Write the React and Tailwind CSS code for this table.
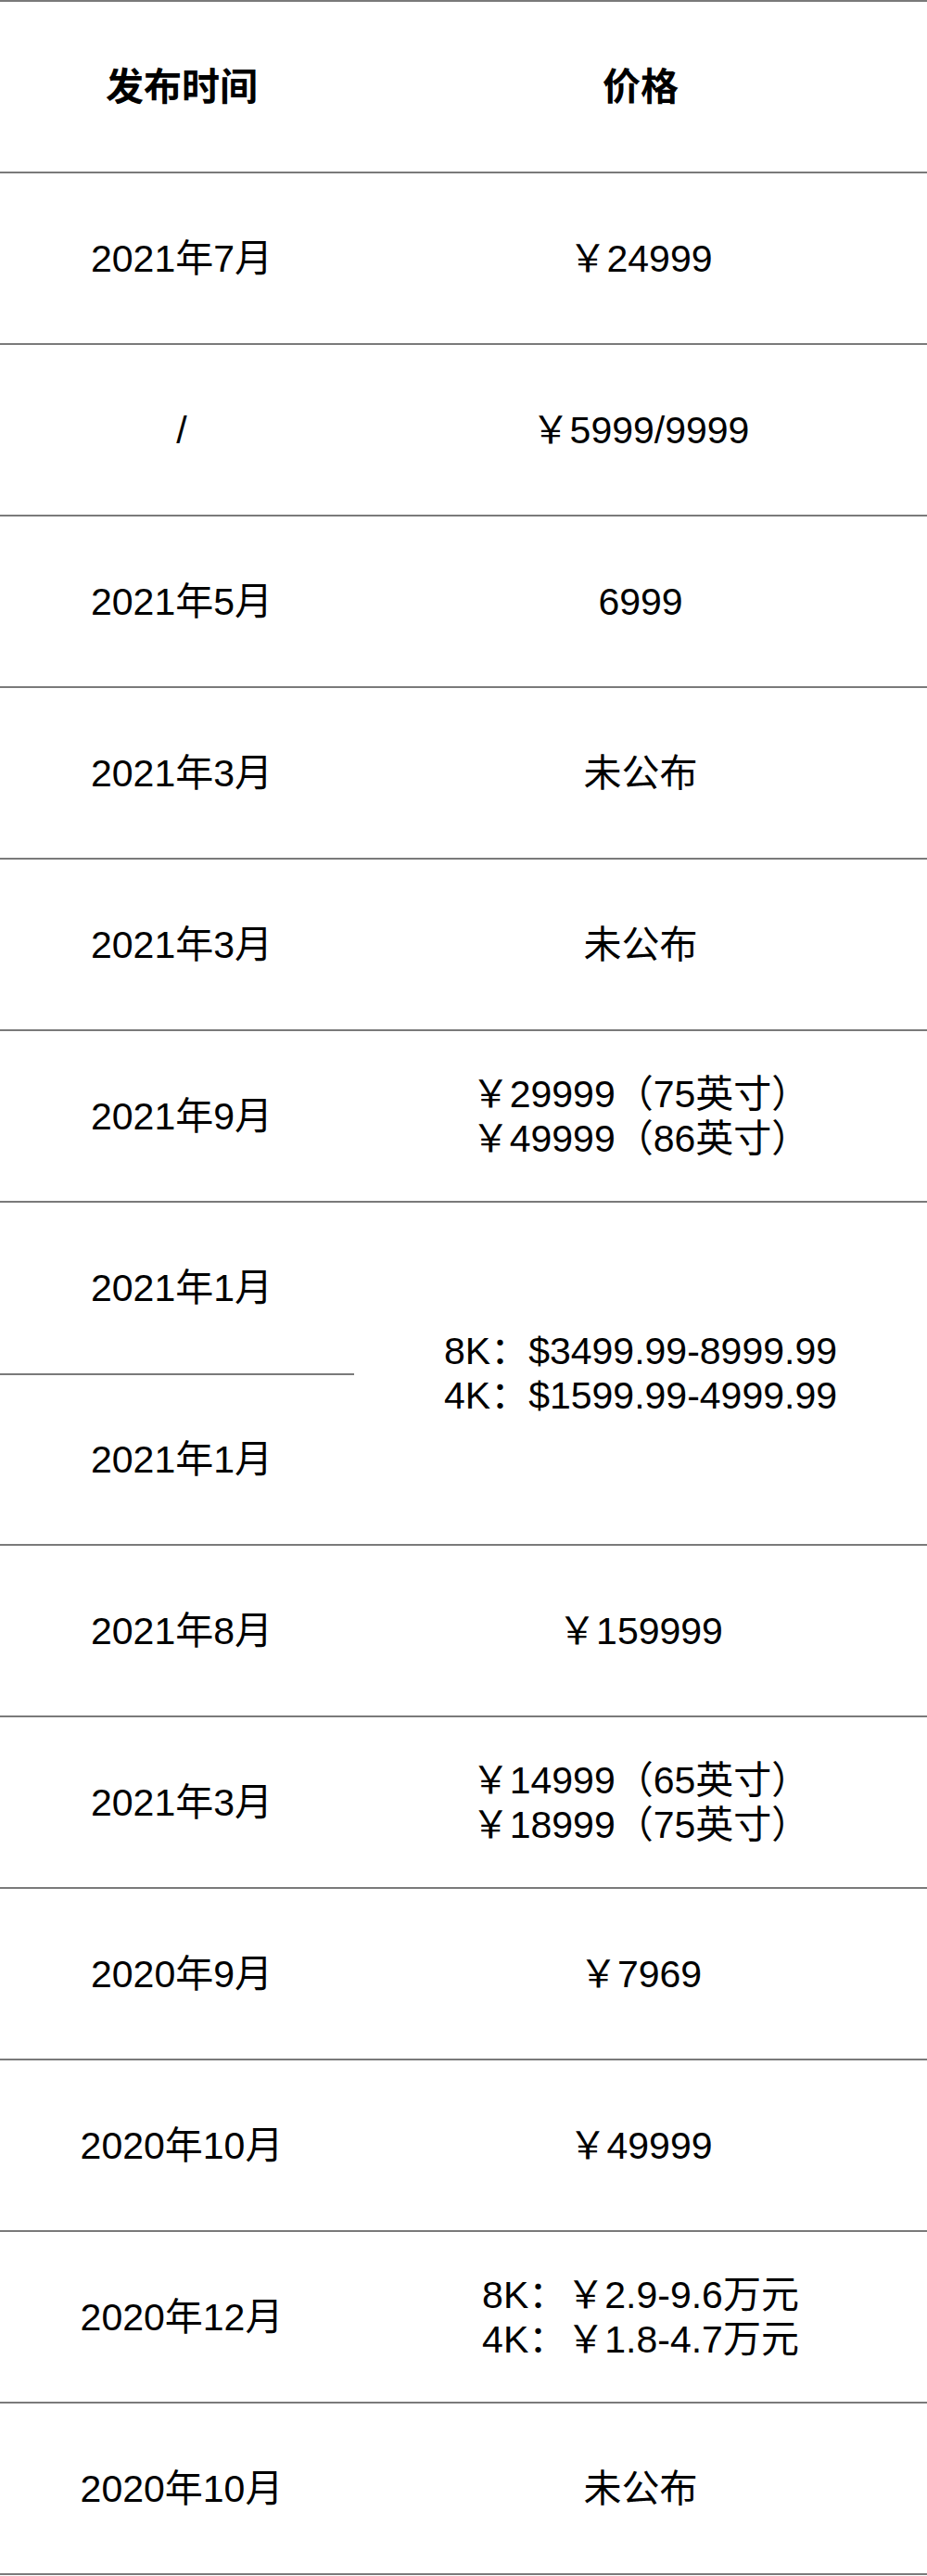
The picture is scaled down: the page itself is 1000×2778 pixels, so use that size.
const rows = [
  { date: '2021年7月', price: ['￥24999'] },
  { date: '/', price: ['￥5999/9999'] },
  { date: '2021年5月', price: ['6999'] },
  { date: '2021年3月', price: ['未公布'] },
  { date: '2021年3月', price: ['未公布'] },
  { date: '2021年9月', price: ['￥29999（75英寸）', '￥49999（86英寸）'] },
  { dates: ['2021年1月', '2021年1月'], price: ['8K：$3499.99-8999.99', '4K：$1599.99-4999.99'] },
  { date: '2021年8月', price: ['￥159999'] },
  { date: '2021年3月', price: ['￥14999（65英寸）', '￥18999（75英寸）'] },
  { date: '2020年9月', price: ['￥7969'] },
  { date: '2020年10月', price: ['￥49999'] },
  { date: '2020年12月', price: ['8K：￥2.9-9.6万元', '4K：￥1.8-4.7万元'] },
  { date: '2020年10月', price: ['未公布'] },
]

function Price({ lines }) {
  return (
    <div className="flex flex-col items-center justify-center text-center">
      {lines.map((l, i) => (
        <div key={i}>{l}</div>
      ))}
    </div>
  )
}

export default function App() {
  return (
    <div
      className="w-[1000px] bg-white text-black text-[41px] leading-[48px] border-b-2 border-[#7a7a7a]"
      style={{ fontFamily: '"Liberation Sans", "Noto Sans CJK SC", sans-serif' }}
    >
      <div className="grid grid-cols-[382px_1fr] h-[185px] border-t-2 border-[#7a7a7a] font-bold">
        <div className="flex items-center justify-center pl-[10px]">发布时间</div>
        <div className="flex items-center justify-center">价格</div>
      </div>
      {rows.map((r, i) =>
        r.dates ? (
          <div key={i} className="grid grid-cols-[382px_1fr] h-[370px] border-t-2 border-[#7a7a7a]">
            <div className="flex flex-col">
              <div className="h-[184px] flex items-center justify-center pl-[10px]">{r.dates[0]}</div>
              <div className="h-[184px] flex items-center justify-center pl-[10px] border-t-2 border-[#7a7a7a]">
                {r.dates[1]}
              </div>
            </div>
            <Price lines={r.price} />
          </div>
        ) : (
          <div key={i} className="grid grid-cols-[382px_1fr] h-[185px] border-t-2 border-[#7a7a7a]">
            <div className="flex items-center justify-center pl-[10px]">{r.date}</div>
            <Price lines={r.price} />
          </div>
        )
      )}
    </div>
  )
}
